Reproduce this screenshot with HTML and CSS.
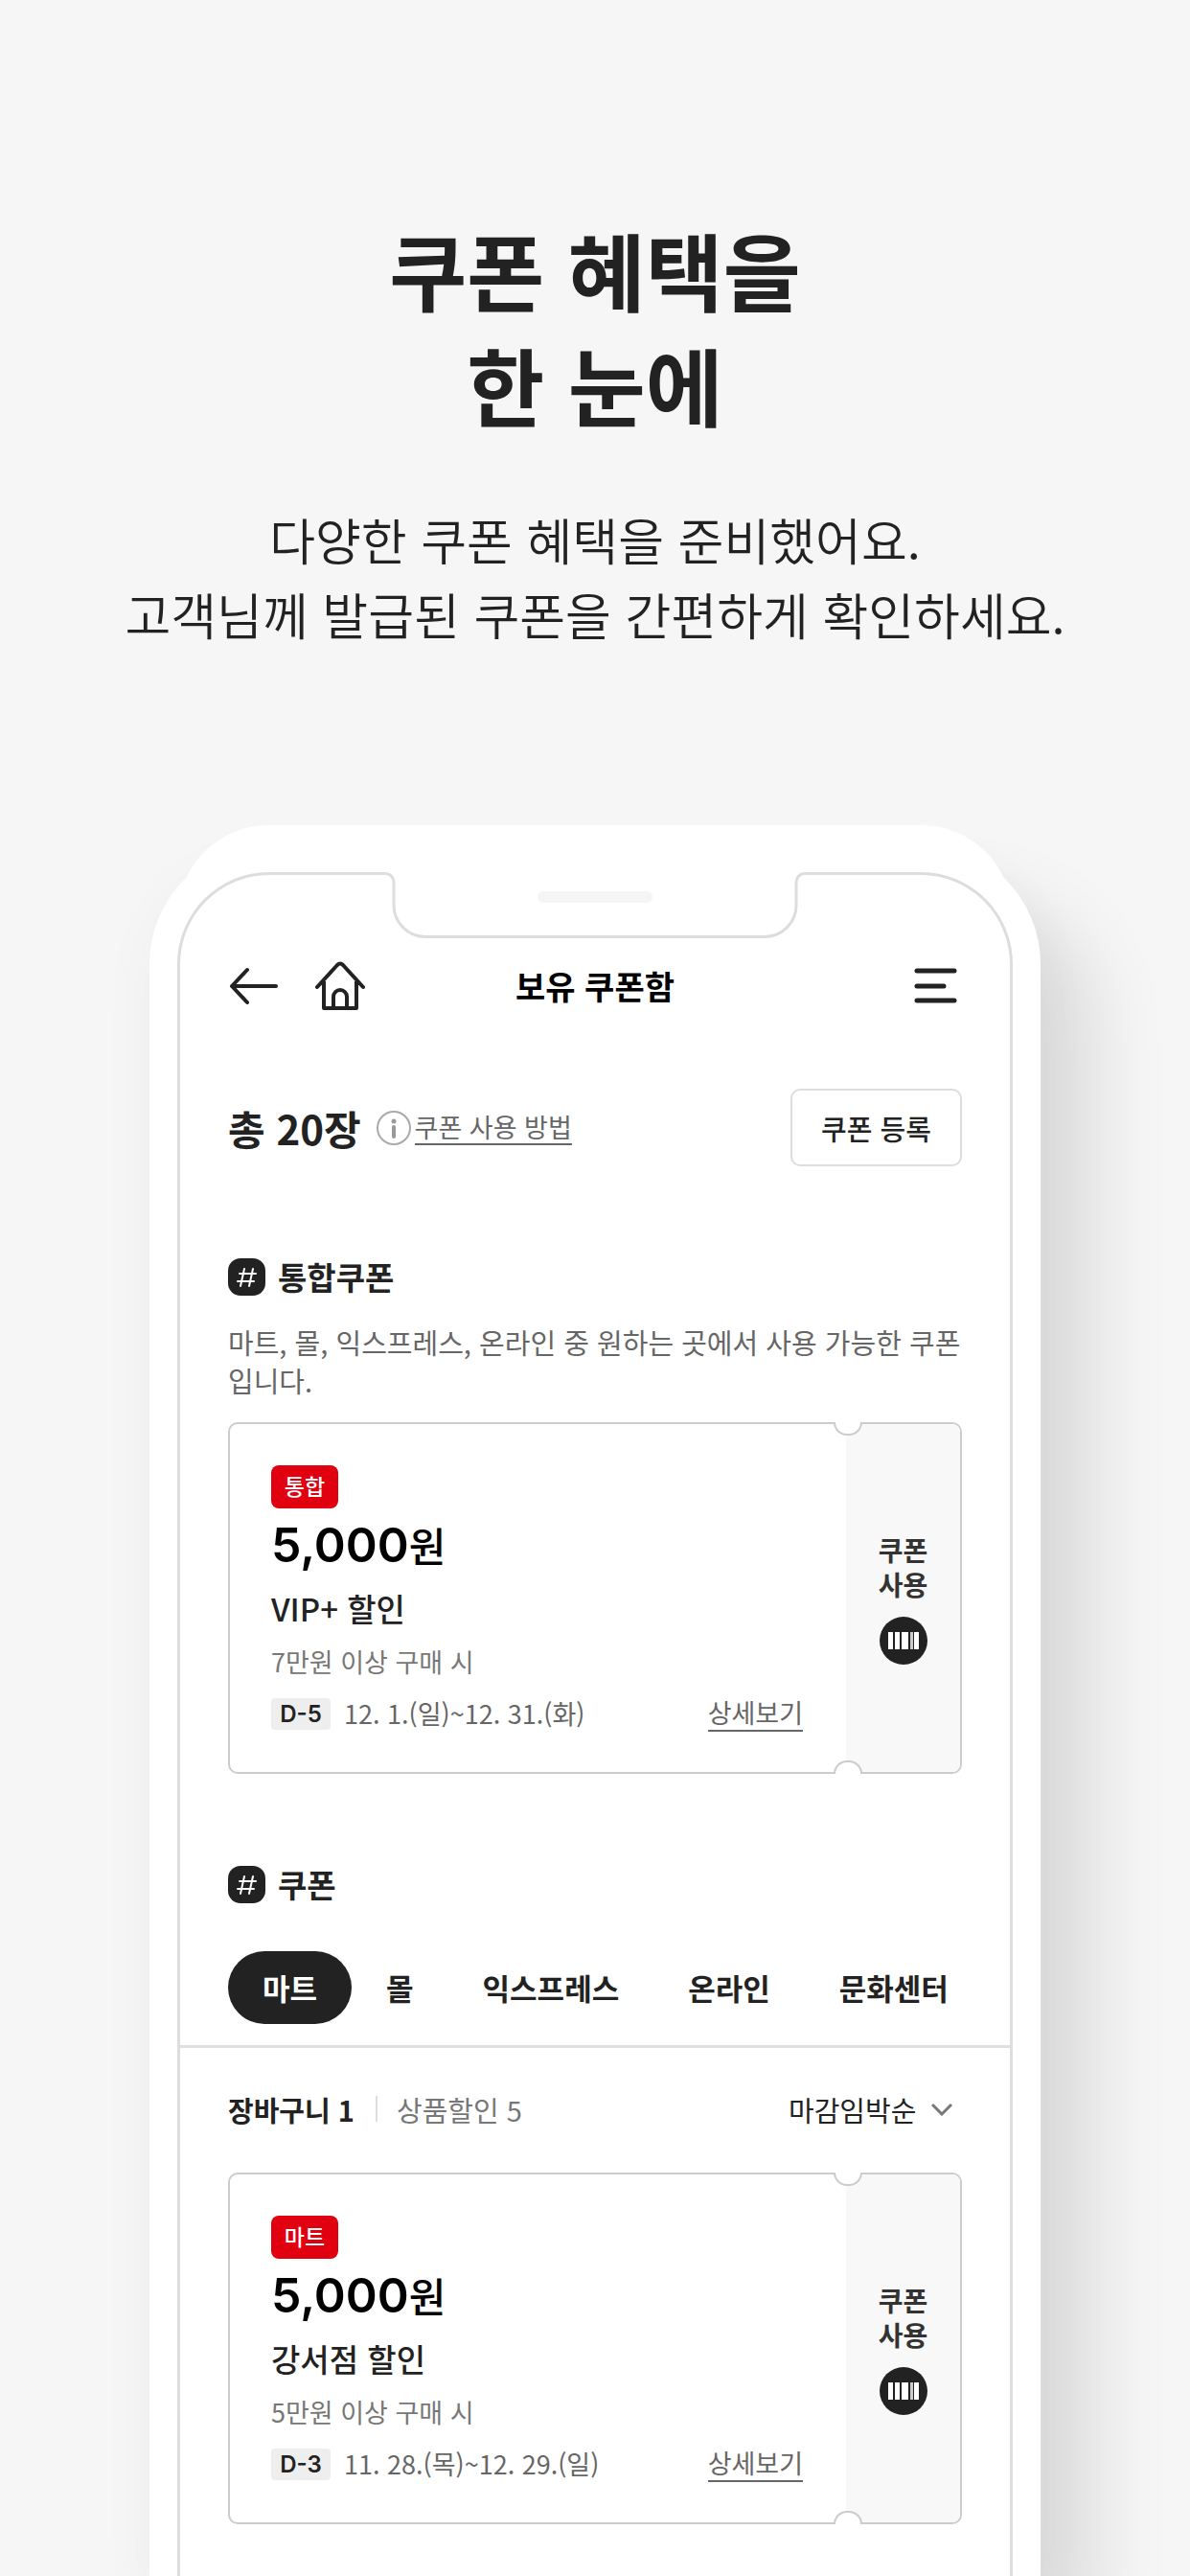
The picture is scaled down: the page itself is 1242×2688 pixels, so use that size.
FILE: index.html
```html
<!DOCTYPE html>
<html lang="ko">
<head>
    <meta charset="UTF-8">
    <meta name="viewport" content="width=device-width, initial-scale=1.0">
    <title>보유 쿠폰함</title>
    <link rel="stylesheet" href="styles.css">
</head>
<body>

<!-- Shared icons -->
<svg class="icon-defs" aria-hidden="true">
    <symbol id="icon-hash" viewBox="0 0 39 39">
        <rect width="39" height="39" rx="13" fill="#222"/>
        <path d="M17 11l-4 18M26 11l-4 18M12 16h17M10 24h17" fill="none" stroke="#fff" stroke-width="2" stroke-linecap="round"/>
    </symbol>
    <symbol id="icon-barcode" viewBox="0 0 50 50">
        <circle cx="25" cy="25" r="25" fill="#222"/>
        <path d="M9 16h5v18H9zM16 16h5v18h-5zM23 16h7v18h-7zM36 16h5v18h-5z" fill="#fff"/>
        <path d="M32 16h3v18h-3z" fill="#ccc"/>
    </symbol>
</svg>

<main class="page">
    <header class="hero">
        <h1>쿠폰 혜택을<br>한 눈에</h1>
        <p>다양한 쿠폰 혜택을 준비했어요.<br>고객님께 발급된 쿠폰을 간편하게 확인하세요.</p>
    </header>

    <div class="phone">
        <div class="screen">
            <!-- Notch -->
            <svg class="notch" width="442" height="70" viewBox="0 0 442 70" aria-hidden="true">
                <rect width="442" height="3" fill="#fff"/>
                <path d="M0 1.5H2a9 9 0 0 1 9 9V34a33 33 0 0 0 33 33.5H398a33 33 0 0 0 33-33.5V10.5a9 9 0 0 1 9-9H442" fill="none" stroke="#ddd" stroke-width="3"/>
                <rect x="161" y="20" width="120" height="12" rx="6" fill="#f5f5f5"/>
            </svg>

            <!-- App bar -->
            <div class="app-bar">
                <div class="app-bar-left">
                    <button class="icon-btn" aria-label="뒤로">
                        <svg width="54" height="54" viewBox="0 0 54 54">
                            <path d="M50 27H4M20 10L4 27l16 17" class="line"/>
                        </svg>
                    </button>
                    <a class="icon-btn" href="#" aria-label="홈">
                        <svg width="54" height="54" viewBox="0 0 54 54">
                            <path d="M4 28L25 5q3-3 6 0L52 28M11 22v28h34V22M21 50V38a7 7 0 0 1 14 0v12" class="line"/>
                        </svg>
                    </a>
                </div>
                <h2>보유 쿠폰함</h2>
                <button class="icon-btn menu-btn" aria-label="메뉴">
                    <svg width="54" height="54" viewBox="0 0 54 54">
                        <path d="M7 11h39M7 27h28M7 42h39" class="line bold"/>
                    </svg>
                </button>
            </div>

            <!-- Total -->
            <div class="total">
                <strong>총 20장</strong>
                <a class="guide" href="#">
                    <svg width="36" height="38" viewBox="0 0 36 38">
                        <circle cx="18" cy="19" r="17" fill="none" stroke="#aaa" stroke-width="2"/>
                        <circle cx="18" cy="12" r="2.5" fill="#999"/>
                        <path d="M18 18v10" stroke="#999" stroke-width="4" stroke-linecap="round"/>
                    </svg>
                    <span>쿠폰 사용 방법</span>
                </a>
                <button class="register">쿠폰 등록</button>
            </div>

            <!-- Integrated coupons -->
            <section class="section">
                <h3><svg width="39" height="39" aria-hidden="true"><use href="#icon-hash"/></svg>통합쿠폰</h3>
                <p class="section-desc">마트, 몰, 익스프레스, 온라인 중 원하는 곳에서 사용 가능한 쿠폰입니다.</p>
                <article class="coupon">
                    <div class="coupon-body">
                        <span class="badge">통합</span>
                        <p class="price">5,000<span>원</span></p>
                        <h4>VIP+ 할인</h4>
                        <p class="condition">7만원 이상 구매 시</p>
                        <div class="period">
                            <span class="d-day">D-5</span>
                            <span>12. 1.(일)~12. 31.(화)</span>
                            <a href="#">상세보기</a>
                        </div>
                    </div>
                    <button class="coupon-use">
                        쿠폰<br>사용
                        <svg width="50" height="50" aria-hidden="true"><use href="#icon-barcode"/></svg>
                    </button>
                </article>
            </section>

            <!-- Coupons by store -->
            <section class="section">
                <h3><svg width="39" height="39" aria-hidden="true"><use href="#icon-hash"/></svg>쿠폰</h3>
                <nav class="tabs">
                    <button class="active">마트</button>
                    <button>몰</button>
                    <button>익스프레스</button>
                    <button>온라인</button>
                    <button>문화센터</button>
                </nav>
                <div class="filter">
                    <button class="active">장바구니 1</button>
                    <button>상품할인 5</button>
                    <label class="sort">
                        <select aria-label="정렬">
                            <option>마감임박순</option>
                        </select>
                        <svg width="22" height="14" viewBox="0 0 22 14" aria-hidden="true">
                            <path d="M1 2l10 10L21 2" fill="none" stroke="#777" stroke-width="3"/>
                        </svg>
                    </label>
                </div>
                <article class="coupon">
                    <div class="coupon-body">
                        <span class="badge">마트</span>
                        <p class="price">5,000<span>원</span></p>
                        <h4>강서점 할인</h4>
                        <p class="condition">5만원 이상 구매 시</p>
                        <div class="period">
                            <span class="d-day">D-3</span>
                            <span>11. 28.(목)~12. 29.(일)</span>
                            <a href="#">상세보기</a>
                        </div>
                    </div>
                    <button class="coupon-use">
                        쿠폰<br>사용
                        <svg width="50" height="50" aria-hidden="true"><use href="#icon-barcode"/></svg>
                    </button>
                </article>
            </section>
        </div>
    </div>
</main>

</body>
</html>
```
FILE: styles.css
```css
*,
*::before,
*::after {
    box-sizing: border-box;
}
body {
    margin: 0;
    background-color: #f6f6f6;
    color: #222;
    font-family: "Noto Sans CJK KR", sans-serif;
}
h1, h2, h3, h4, p {
    margin: 0;
}
button, select {
    padding: 0;
    border: none;
    background: none;
    color: inherit;
    font-family: inherit;
    cursor: pointer;
}
a {
    color: inherit;
}
svg {
    display: block;
    flex-shrink: 0;
}
.icon-defs {
    position: absolute;
    width: 0;
    height: 0;
}
.page {
    min-height: 100vh;
    display: flex;
    flex-direction: column;
    align-items: center;
    overflow: hidden;
}

/* Hero */
.hero {
    padding: 220px 20px 0;
    text-align: center;
}
.hero h1 {
    font-size: 88px;
    line-height: 120px;
    font-weight: 700;
}
.hero p {
    margin-top: 64px;
    font-size: 52px;
    line-height: 78px;
    font-weight: 350;
}

/* Phone frame */
.phone {
    position: relative;
    flex: 1;
    display: flex;
    width: 100%;
    max-width: 930px;
    margin-top: 201px;
    padding: 29px 29px 0;
    border-radius: 125px 125px 0 0;
    background-color: #fff;
    box-shadow: 56px 60px 80px rgba(0, 0, 0, 0.11), 0 20px 60px rgba(0, 0, 0, 0.04);
}
.phone::before {
    content: "";
    position: absolute;
    top: -20px;
    left: 29px;
    right: 29px;
    height: 120px;
    border-radius: 96px 96px 0 0;
    background-color: #fff;
}
.screen {
    position: relative;
    flex: 1;
    min-width: 0;
    padding: 76px 50px 53px;
    border: 3px solid #ddd;
    border-bottom: none;
    border-radius: 96px 96px 0 0;
}
.notch {
    position: absolute;
    top: -3px;
    left: 50%;
    transform: translateX(-50%);
}

/* App bar */
.app-bar {
    height: 80px;
    display: grid;
    grid-template-columns: 1fr auto 1fr;
    align-items: center;
}
.app-bar h2 {
    color: #000;
    font-size: 34px;
    line-height: 48px;
    font-weight: 700;
}
.app-bar-left {
    display: flex;
    gap: 35px;
}
.menu-btn {
    justify-self: end;
}
.line {
    fill: none;
    stroke: #222;
    stroke-width: 4;
    stroke-linecap: round;
    stroke-linejoin: round;
}
.line.bold {
    stroke-width: 5;
}

/* Total */
.total {
    display: flex;
    align-items: center;
    margin-top: 67px;
}
.total strong {
    font-size: 42px;
    line-height: 60px;
    font-weight: 700;
}
.guide {
    display: flex;
    align-items: center;
    gap: 4px;
    margin-left: 16px;
    color: #666;
    text-decoration: none;
}
.guide span {
    border-bottom: 2px solid #666;
    font-size: 27px;
    line-height: 34px;
}
.register {
    width: 179px;
    height: 81px;
    margin-left: auto;
    border: 2px solid #ddd;
    border-radius: 10px;
    font-size: 29px;
    font-weight: 500;
}

/* Sections */
.section {
    margin-top: 95px;
}
.section h3 {
    display: flex;
    align-items: center;
    gap: 13px;
    font-size: 33px;
    line-height: 40px;
    font-weight: 700;
}
.section-desc {
    margin: 28px 0 24px;
    color: #666;
    font-size: 29px;
    line-height: 40px;
}

/* Coupon */
.coupon {
    position: relative;
    display: flex;
    border: 2px solid #ccc;
    border-radius: 10px;
}
.coupon::before,
.coupon::after {
    content: "";
    position: absolute;
    right: 102px;
    width: 30px;
    height: 14px;
    border: 2px solid #ccc;
    background-color: #fff;
}
.coupon::before {
    top: -2px;
    border-top: none;
    border-radius: 0 0 15px 15px;
}
.coupon::after {
    bottom: -2px;
    border-bottom: none;
    border-radius: 15px 15px 0 0;
}
.coupon-body {
    flex: 1;
    padding: 43px 45px 41px 43px;
}
.badge {
    display: block;
    width: 70px;
    padding-bottom: 3px;
    border-radius: 8px;
    background-color: #e0000f;
    color: #fff;
    font-size: 23px;
    line-height: 42px;
    font-weight: 500;
    text-align: center;
}
.price {
    margin-top: 8px;
    color: #000;
    font-family: Inter, "Noto Sans CJK KR", sans-serif;
    font-size: 50px;
    line-height: 60px;
    font-weight: 600;
}
.price span {
    font-size: 42px;
    line-height: 42px;
    font-weight: 500;
}
.coupon h4 {
    margin-top: 12px;
    font-size: 33px;
    line-height: 48px;
    font-weight: 500;
}
.condition {
    margin-top: 12px;
    color: #777;
    font-size: 27px;
    line-height: 40px;
}
.period {
    display: flex;
    align-items: center;
    gap: 14px;
    margin-top: 14px;
    color: #666;
    font-size: 27px;
    line-height: 40px;
}
.period a {
    margin-left: auto;
    border-bottom: 2px solid #666;
    line-height: 36px;
    text-decoration: none;
}
.d-day {
    width: 62px;
    border-radius: 4px;
    background-color: #eee;
    color: #222;
    font-family: Inter, sans-serif;
    font-size: 24px;
    line-height: 33px;
    font-weight: 600;
    text-align: center;
}
.coupon-use {
    display: flex;
    flex-direction: column;
    align-items: center;
    justify-content: center;
    width: 119px;
    border-radius: 0 8px 8px 0;
    background-color: #f8f8f8;
    color: #333;
    font-size: 28px;
    line-height: 36px;
    font-weight: 700;
}
.coupon-use svg {
    margin-top: 16px;
}

/* Tabs */
.tabs {
    display: flex;
    margin: 50px -50px 0;
    padding: 0 0 22px 50px;
    border-bottom: 3px solid #e0e0e0;
}
.tabs button {
    flex-shrink: 0;
    height: 76px;
    padding: 0 36px 2px;
    border-radius: 38px;
    font-size: 31px;
    font-weight: 700;
}
.tabs .active {
    background-color: #222;
    color: #fff;
}

/* Filter */
.filter {
    display: flex;
    align-items: center;
    margin: 44px 0 46px;
}
.filter button,
.filter select {
    font-size: 29px;
    line-height: 40px;
}
.filter button {
    color: #777;
}
.filter .active {
    color: #222;
    font-weight: 700;
}
.filter .active::after {
    content: "";
    display: inline-block;
    width: 2px;
    height: 27px;
    margin: 0 20px 0 22px;
    background-color: #ddd;
}
.sort {
    display: flex;
    align-items: center;
    gap: 15px;
    margin-left: auto;
    padding-right: 10px;
}
.sort select {
    appearance: none;
}
```
